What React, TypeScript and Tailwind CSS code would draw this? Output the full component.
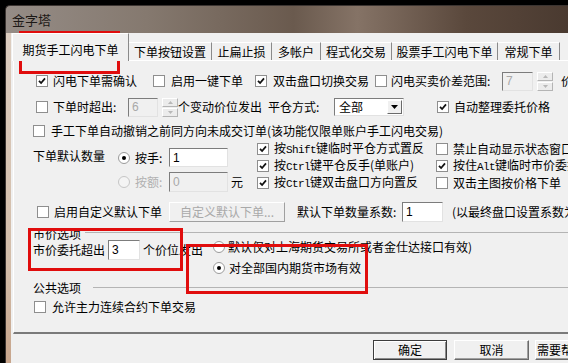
import React from 'react';

const Box: React.FC<{ on?: boolean }> = ({ on }) => (
  <span className="flex h-[12px] w-[12px] shrink-0 items-center justify-center border border-[#8e8e8e] bg-white">
    {on && (
      <svg width="8" height="8" viewBox="0 0 8 8">
        <path d="M1 3.8 L3.1 6 L7 1.4" fill="none" stroke="#111" strokeWidth="1.8" />
      </svg>
    )}
  </span>
);

const Check: React.FC<{ on?: boolean; label: React.ReactNode; className?: string }> = ({ on, label, className = '' }) => (
  <div className={`flex items-center gap-[5px] ${className}`}>
    <Box on={on} />
    <span className="whitespace-nowrap">{label}</span>
  </div>
);

const Radio: React.FC<{ on?: boolean; off?: boolean }> = ({ on, off }) => (
  <span
    className={`flex h-[12px] w-[12px] shrink-0 items-center justify-center rounded-full border ${
      off ? 'border-[#c6c6c6] bg-[#f4f4f4]' : 'border-[#9a9a9a] bg-white'
    }`}
  >
    {on && <span className="h-[4px] w-[4px] rounded-full bg-black" />}
  </span>
);

const Latin: React.FC<{ children: React.ReactNode }> = ({ children }) => (
  <span className="font-['Liberation_Mono',monospace] text-[11px] tracking-[-0.6px]">{children}</span>
);

const Field: React.FC<{ value: string; className: string; off?: boolean }> = ({ value, className, off }) => (
  <div
    className={`flex shrink-0 items-center border border-t-[#7c7c7c] border-l-[#7c7c7c] border-r-[#e2e2e2] border-b-[#e2e2e2] pl-[3px] font-['Liberation_Sans',sans-serif] text-[12px] ${
      off ? 'bg-[#f0f0f0] text-[#a8a8a8]' : 'bg-white text-black'
    } ${className}`}
  >
    {value}
  </div>
);

const Tri: React.FC<{ up?: boolean; color: string }> = ({ up, color }) => (
  <svg width="5" height="3" viewBox="0 0 5 3">
    <path d={up ? 'M0 3 L2.5 0 L5 3 Z' : 'M0 0 L5 0 L2.5 3 Z'} fill={color} />
  </svg>
);

const Spin: React.FC = () => (
  <div className="flex h-[19px] w-[16px] shrink-0 flex-col gap-[1px]">
    <div className="flex flex-1 items-center justify-center border border-t-white border-l-white border-r-[#b4b4b4] border-b-[#b4b4b4] bg-[#ececec]">
      <Tri up color="#b8b8b8" />
    </div>
    <div className="flex flex-1 items-center justify-center border border-t-white border-l-white border-r-[#b4b4b4] border-b-[#b4b4b4] bg-[#ececec]">
      <Tri color="#b8b8b8" />
    </div>
  </div>
);

const Tab: React.FC<{ label: string; className: string }> = ({ label, className }) => (
  <div className={`flex h-[18px] shrink-0 items-center justify-center border-t border-t-white border-r border-r-[#8a8a8a] ${className}`}>
    {label}
  </div>
);

const App: React.FC = () => {
  return (
    <div className="relative h-[363px] w-[568px] overflow-hidden bg-black font-['Noto_Sans_CJK_SC',sans-serif] text-[12px] leading-none text-black">
      <div className="ml-[5px] mt-[5px] flex h-[358px] w-[640px] flex-col rounded-tl-[5px] border-l border-t border-[#3b3431] bg-[linear-gradient(to_right,#958c86_0%,#85796f_22%,#6a5a4e_45%,#857366_55%,#5a483c_72%,#4a3a30_88%,#6b5a4f_100%)]">
        {/* title */}
        <div className="flex h-[27px] shrink-0 items-center pl-[6px] text-[13px] text-[#1d1917]">金字塔</div>

        <div className="flex flex-1">
          <div className="w-[5px] shrink-0 bg-[linear-gradient(to_bottom,#dccdc0,#d2bca8_70%,#c7a58c)]" />
          <div className="flex-1 bg-[#f0f0f0]">
            {/* tabs */}
            <div className="flex h-[27px] items-end pl-[1px]">
              <div className="relative z-10 mb-[-1px] flex h-[28px] w-[117px] shrink-0 items-center justify-center border-l border-t border-r border-l-white border-t-white border-r-[#8a8a8a] bg-[#f0f0f0] pt-[4px]">
                期货手工闪电下单
              </div>
              <Tab label="下单按钮设置" className="w-[83px]" />
              <Tab label="止扁止损" className="w-[60px]" />
              <Tab label="多帐户" className="w-[49px]" />
              <Tab label="程式化交易" className="w-[71px]" />
              <Tab label="股票手工闪电下单" className="w-[106px]" />
              <Tab label="常规下单" className="w-[62px]" />
            </div>

            {/* panel */}
            <div className="ml-[2px] flex h-[274px] flex-col border-l border-t border-b-2 border-l-white border-t-white border-b-[#7a7a7a]">
              {/* row 1 */}
              <div className="mt-[10px] flex h-[20px] items-center pl-[22px]">
                <Check on label="闪电下单需确认" className="w-[117px]" />
                <Check label="启用一键下单" className="w-[102px] gap-[6px]" />
                <Check on label="双击盘口切换交易" className="w-[120px] gap-[6px]" />
                <Box />
                <span className="ml-[4px] w-[111px] whitespace-nowrap">闪电买卖价差范围:</span>
                <Field value="7" off className="h-[19px] w-[31px]" />
                <div className="ml-[4px]">
                  <Spin />
                </div>
                <span className="ml-[8px] whitespace-nowrap">价</span>
              </div>

              {/* row 2 */}
              <div className="mt-[6px] flex h-[20px] items-center pl-[22px]">
                <Check label="下单时超出:" className="w-[92px]" />
                <Field value="6" off className="h-[19px] w-[30px]" />
                <div className="ml-[4px]">
                  <Spin />
                </div>
                <span className="w-[90px] whitespace-nowrap">个变动价位发出</span>
                <span className="w-[66px] whitespace-nowrap">平仓方式:</span>
                <div className="flex h-[18px] w-[70px] shrink-0 items-center border border-t-[#7c7c7c] border-l-[#7c7c7c] border-r-[#e2e2e2] border-b-[#e2e2e2] bg-white">
                  <span className="flex-1 pl-[4px]">全部</span>
                  <span className="mr-[1px] flex h-[14px] w-[15px] items-center justify-center border border-t-white border-l-white border-r-[#6a6a6a] border-b-[#6a6a6a] bg-[#f0f0f0]">
                    <svg width="7" height="4" viewBox="0 0 7 4">
                      <path d="M0 0 L7 0 L3.5 4 Z" fill="#000" />
                    </svg>
                  </span>
                </div>
                <Check on label="自动整理委托价格" className="ml-[33px] gap-[4px]" />
              </div>

              {/* row 3 */}
              <div className="mt-[5px] flex h-[18px] items-center pl-[19px]">
                <Check label="手工下单自动撤销之前同方向未成交订单(该功能仅限单账户手工闪电交易)" className="gap-[6px]" />
              </div>

              {/* row 4 */}
              <div className="flex pl-[19px]">
                <div className="w-[85px] shrink-0 pt-[7px]">
                  <div className="flex h-[18px] items-center whitespace-nowrap">下单默认数量</div>
                </div>
                <div className="w-[139px] shrink-0 pt-[8px]">
                  <div className="flex h-[19px] items-center">
                    <Radio on />
                    <span className="w-[39px] pl-[5px]">按手:</span>
                    <Field value="1" className="h-[19px] w-[59px]" />
                  </div>
                  <div className="mt-[5px] flex h-[20px] items-center">
                    <Radio off />
                    <span className="w-[39px] pl-[5px] text-[#b0b0b0]">按额:</span>
                    <Field value="0" off className="h-[20px] w-[59px]" />
                    <span className="ml-[3px]">元</span>
                  </div>
                </div>
                <div className="flex w-[179px] shrink-0 flex-col">
                  <div className="flex h-[17px] items-center">
                    <Check on label={<>按<Latin>Shift</Latin>键临时平仓方式置反</>} />
                  </div>
                  <div className="flex h-[17px] items-center">
                    <Check on label={<>按<Latin>Ctrl</Latin>键平仓反手(单账户)</>} />
                  </div>
                  <div className="flex h-[18px] items-center">
                    <Check on label={<>按<Latin>Ctrl</Latin>键双击盘口方向置反</>} />
                  </div>
                </div>
                <div className="flex flex-col">
                  <div className="flex h-[17px] items-center">
                    <Check label="禁止自动显示状态窗口" />
                  </div>
                  <div className="flex h-[17px] items-center">
                    <Check on label={<>按住<Latin>Alt</Latin>键临时市价委托</>} />
                  </div>
                  <div className="flex h-[18px] items-center">
                    <Check label="双击主图按价格下单" />
                  </div>
                </div>
              </div>

              {/* row 6 */}
              <div className="mt-[9px] flex h-[22px] items-center pl-[23px]">
                <Check label="启用自定义默认下单" className="w-[132px]" />
                <div className="flex h-[20px] w-[116px] shrink-0 items-center justify-center border border-t-white border-l-white border-r-[#a0a0a0] border-b-[#a0a0a0] text-[#a9a9a9]">
                  自定义默认下单...
                </div>
                <span className="ml-[12px] w-[105px] whitespace-nowrap">默认下单数量系数:</span>
                <Field value="1" className="h-[20px] w-[41px]" />
                <span className="ml-[9px] whitespace-nowrap">(以最终盘口设置系数为准)</span>
              </div>

              {/* market price group */}
              <div className="mt-[5px] flex h-[12px] pl-[19px]">
                <span className="flex h-[12px] items-center whitespace-nowrap">市价选项</span>
                <div className="ml-[4px] mt-[4px] h-[1px] flex-1 bg-[#b4b4b4]" />
              </div>
              <div className="flex pl-[19px]">
                <div className="flex h-[20px] items-center">
                  <span className="w-[75px] whitespace-nowrap">市价委托超出</span>
                  <Field value="3" className="h-[20px] w-[32px]" />
                  <span className="ml-[3px] w-[70px] whitespace-nowrap">个价位发出</span>
                </div>
                <div className="flex flex-col">
                  <div className="flex h-[14px] items-center gap-[3px]">
                    <Radio />
                    <span className="whitespace-nowrap">默认仅对上海期货交易所或者金仕达接口有效)</span>
                  </div>
                  <div className="mt-[4px] flex h-[20px] items-center gap-[4px]">
                    <Radio on />
                    <span className="whitespace-nowrap">对全部国内期货市场有效</span>
                  </div>
                </div>
              </div>

              {/* common group */}
              <div className="mt-[3px] flex h-[14px] pl-[19px]">
                <span className="flex h-[14px] items-center whitespace-nowrap">公共选项</span>
                <div className="ml-[12px] mt-[6px] h-[1px] flex-1 bg-[#b4b4b4]" />
              </div>
              <div className="mt-[3px] flex h-[18px] items-center pl-[20px]">
                <Check label="允许主力连续合约下单交易" className="gap-[6px]" />
              </div>
            </div>

            {/* buttons */}
            <div className="mt-[6px] flex h-[20px] gap-[7px] pl-[362px]">
              <div className="flex h-[20px] w-[74px] shrink-0 items-center justify-center border border-[#3c3c3c] bg-[#f0f0f0] shadow-[inset_1px_1px_0_#fff,inset_-1px_-1px_0_#8a8a8a]">
                确定
              </div>
              <div className="flex h-[20px] w-[75px] shrink-0 items-center justify-center border border-t-white border-l-white border-r-[#6a6a6a] border-b-[#6a6a6a] bg-[#f0f0f0] shadow-[inset_-1px_-1px_0_#a0a0a0]">
                取消
              </div>
              <div className="ml-[-1px] flex h-[20px] w-[75px] shrink-0 items-center border border-t-white border-l-white border-r-[#6a6a6a] border-b-[#6a6a6a] bg-[#f0f0f0] pl-[1px] shadow-[inset_-1px_-1px_0_#a0a0a0]">
                需要帮助
              </div>
            </div>
          </div>
        </div>
      </div>

      {/* annotation boxes */}
      <div className="absolute left-[19px] top-[31px] h-[43px] w-[101px] border-[3px] border-[#e00d0d]" />
      <div className="absolute left-[28px] top-[228px] h-[43px] w-[155px] border-[3px] border-[#e00d0d]" />
      <div className="absolute left-[186px] top-[244px] h-[50px] w-[182px] border-[3px] border-[#e00d0d]" />
    </div>
  );
};

export default App;
